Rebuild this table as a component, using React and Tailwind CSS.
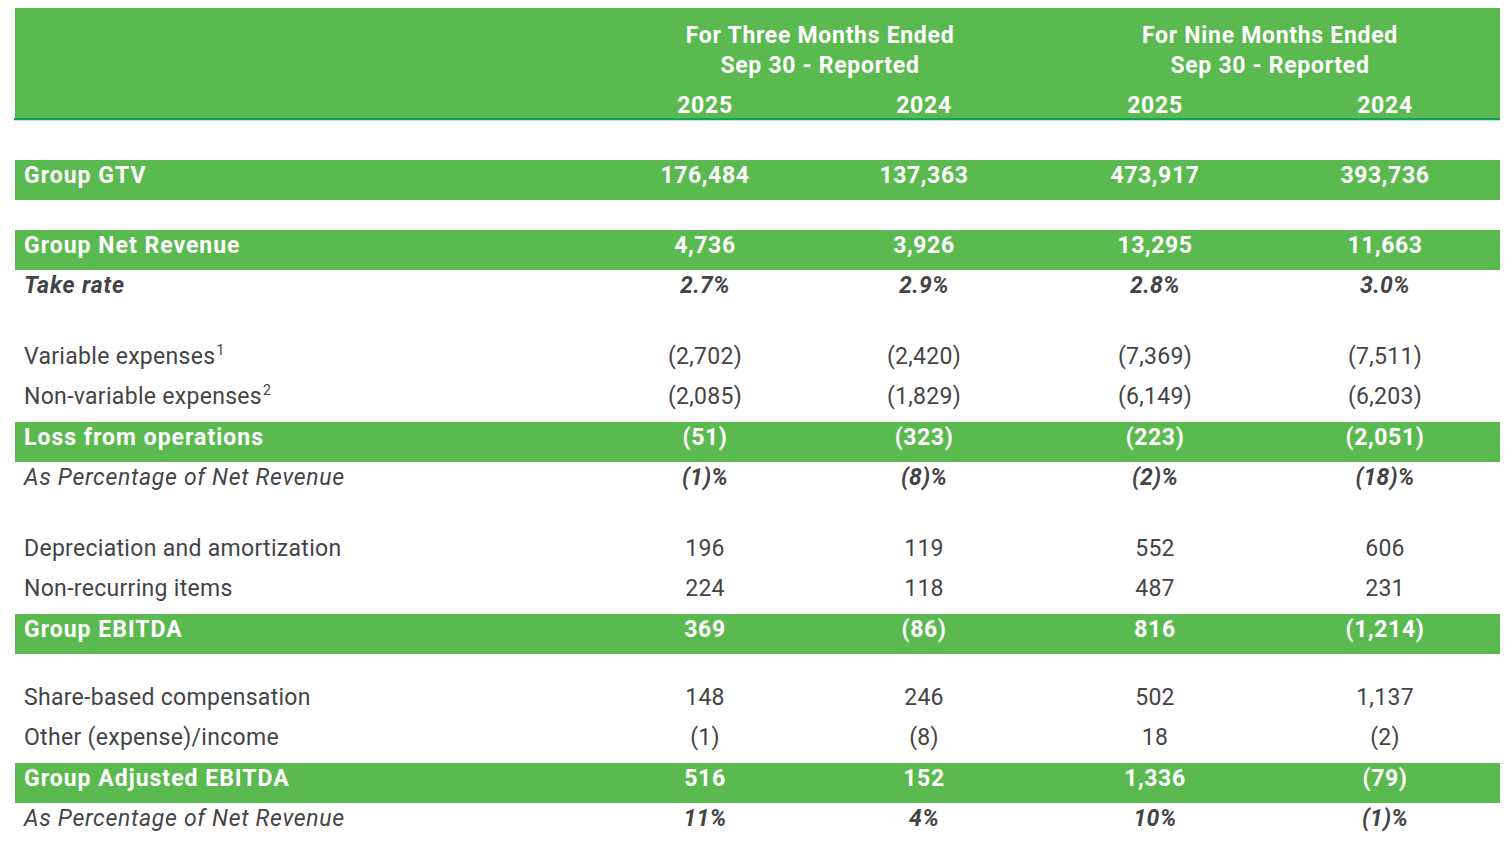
import React from 'react';

const cols = 'grid grid-cols-[575px_230px_208px_254px_206px_1fr]';

const rows = [
  { type: 'gap', h: 'h-[40px]' },
  { type: 'band', h: 'h-[40px]', label: 'Group GTV', values: ['176,484', '137,363', '473,917', '393,736'] },
  { type: 'gap', h: 'h-[30px]' },
  { type: 'band', h: 'h-[40px]', label: 'Group Net Revenue', values: ['4,736', '3,926', '13,295', '11,663'] },
  { type: 'boldItalic', h: 'h-[41px]', label: 'Take rate', values: ['2.7%', '2.9%', '2.8%', '3.0%'] },
  { type: 'gap', h: 'h-[30px]' },
  { type: 'plain', h: 'h-[40px]', label: 'Variable expenses', sup: '1', values: ['(2,702)', '(2,420)', '(7,369)', '(7,511)'] },
  { type: 'plain', h: 'h-[41px]', label: 'Non-variable expenses', sup: '2', values: ['(2,085)', '(1,829)', '(6,149)', '(6,203)'] },
  { type: 'band', h: 'h-[40px]', label: 'Loss from operations', values: ['(51)', '(323)', '(223)', '(2,051)'] },
  { type: 'italic', h: 'h-[41px]', label: 'As Percentage of Net Revenue', values: ['(1)%', '(8)%', '(2)%', '(18)%'] },
  { type: 'gap', h: 'h-[30px]' },
  { type: 'plain', h: 'h-[40px]', label: 'Depreciation and amortization', values: ['196', '119', '552', '606'] },
  { type: 'plain', h: 'h-[41px]', label: 'Non-recurring items', values: ['224', '118', '487', '231'] },
  { type: 'band', h: 'h-[40px]', label: 'Group EBITDA', values: ['369', '(86)', '816', '(1,214)'] },
  { type: 'gap', h: 'h-[28px]' },
  { type: 'plain', h: 'h-[40px]', label: 'Share-based compensation', values: ['148', '246', '502', '1,137'] },
  { type: 'plain', h: 'h-[41px]', label: 'Other (expense)/income', values: ['(1)', '(8)', '18', '(2)'] },
  { type: 'band', h: 'h-[40px]', label: 'Group Adjusted EBITDA', values: ['516', '152', '1,336', '(79)'] },
  { type: 'italic', h: 'h-[41px]', label: 'As Percentage of Net Revenue', values: ['11%', '4%', '10%', '(1)%'] },
];

function Row({ row }) {
  if (row.type === 'gap') return <div className={row.h} />;

  const isBand = row.type === 'band';
  const rowCls = isBand
    ? 'bg-[#5bba4f] text-white font-bold'
    : 'text-[#444446] tracking-[0.3px]';
  const labelCls =
    row.type === 'boldItalic'
      ? 'font-bold italic tracking-[0.9px]'
      : row.type === 'italic'
      ? 'italic tracking-[0.7px]'
      : isBand
      ? 'tracking-[1px]'
      : '';
  const valueCls =
    row.type === 'boldItalic' || row.type === 'italic'
      ? 'font-bold italic'
      : isBand
      ? 'tracking-[0.6px]'
      : '';

  return (
    <div className={`${cols} ${row.h} items-start ${rowCls}`}>
      <div className={`pl-[9px] leading-[31px] ${labelCls}`}>
        {row.label}
        {row.sup && <sup className="text-[14px] top-[-9px] ml-[1px]">{row.sup}</sup>}
      </div>
      {row.values.map((v, i) => (
        <div key={i} className={`text-center leading-[31px] ${valueCls}`}>
          {v}
        </div>
      ))}
      <div />
    </div>
  );
}

export default function App() {
  return (
    <div className="w-[1512px] h-[858px] bg-white pt-[8px] pl-[15px] pr-[12px] font-['Roboto','Liberation_Sans',sans-serif] text-[23px]">
      {/* Header */}
      <div className="bg-[#5bba4f] text-white font-bold tracking-[0.7px] h-[110px] flex flex-col">
        <div className="flex pt-[13px]">
          <div className="w-[575px]" />
          <div className="w-[460px] text-center leading-[30px]">
            For Three Months Ended
            <br />
            Sep 30 - Reported
          </div>
          <div className="w-[440px] text-center leading-[30px]">
            For Nine Months Ended
            <br />
            Sep 30 - Reported
          </div>
        </div>
        <div className={`${cols} pt-[12px] leading-[26px]`}>
          <div />
          <div className="text-center">2025</div>
          <div className="text-center">2024</div>
          <div className="text-center">2025</div>
          <div className="text-center">2024</div>
          <div />
        </div>
      </div>
      <div className="h-[2px] bg-[#0f9f5e] -ml-[1px]" />
      <div className="h-[1px] bg-[#b9e6d2] -ml-[1px]" />

      {/* Body */}
      <div className="-mt-[1px]">
        {rows.map((row, i) => (
          <Row key={i} row={row} />
        ))}
      </div>
    </div>
  );
}
